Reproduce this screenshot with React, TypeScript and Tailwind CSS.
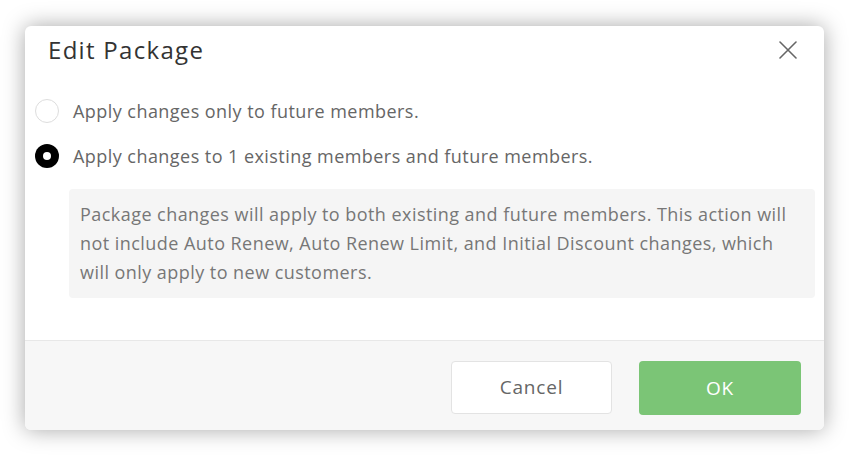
export default function App() {
  return (
    <div className="w-[850px] h-[455px] bg-white pl-[25px] pt-[26px] font-['Open_Sans',sans-serif]">
      <div className="w-[799px] h-[404px] rounded-[6px] bg-white shadow-[0_0_22px_rgba(0,0,0,0.35)] flex flex-col overflow-hidden">
        {/* Header */}
        <div className="flex items-start justify-between pl-[23px] pr-[27px] pt-[8px]">
          <h2 className="text-[24px] leading-[32px] tracking-[1.3px] text-[#333] font-normal">Edit Package</h2>
          <button className="mt-[7px] text-[#666]">
            <svg width="18" height="18" viewBox="0 0 18 18" fill="none" stroke="currentColor" strokeWidth="1.6" strokeLinecap="round">
              <path d="M1 1L17 17M17 1L1 17" />
            </svg>
          </button>
        </div>

        {/* Options */}
        <div className="flex flex-col pl-[10px] pr-[9px] pt-[30px] flex-1">
          <label className="flex items-center gap-[14px] h-[30px]">
            <span className="w-[24px] h-[24px] rounded-full border border-[#ddd] bg-white" />
            <span className="text-[18px] tracking-[0.45px] text-[#666]">Apply changes only to future members.</span>
          </label>
          <label className="flex items-center gap-[14px] h-[30px] mt-[15px]">
            <span className="w-[24px] h-[24px] rounded-full bg-black flex items-center justify-center">
              <span className="w-[8px] h-[8px] rounded-full bg-white" />
            </span>
            <span className="text-[18px] tracking-[0.45px] text-[#666]">Apply changes to 1 existing members and future members.</span>
          </label>
          <div className="ml-[34px] mt-[18px] rounded-[4px] bg-[#f5f5f5] pl-[11px] pr-[23px] py-[11px] text-[18px] leading-[29px] tracking-[0.45px] text-[#777]">
            Package changes will apply to both existing and future members. This action will not include Auto Renew, Auto Renew Limit, and Initial Discount changes, which will only apply to new customers.
          </div>
        </div>

        {/* Footer */}
        <div className="h-[90px] border-t border-[#e8e8e8] bg-[#f7f7f7] flex justify-end items-start gap-[27px] pt-[20px] pr-[23px]">
          <button className="w-[161px] h-[53px] rounded-[4px] border border-[#e3e3e3] bg-white text-[19px] tracking-[0.8px] text-[#666]">
            Cancel
          </button>
          <button className="w-[162px] h-[54px] rounded-[4px] bg-[#7bc576] text-[19px] tracking-[0.8px] text-white">
            OK
          </button>
        </div>
      </div>
    </div>
  );
}
